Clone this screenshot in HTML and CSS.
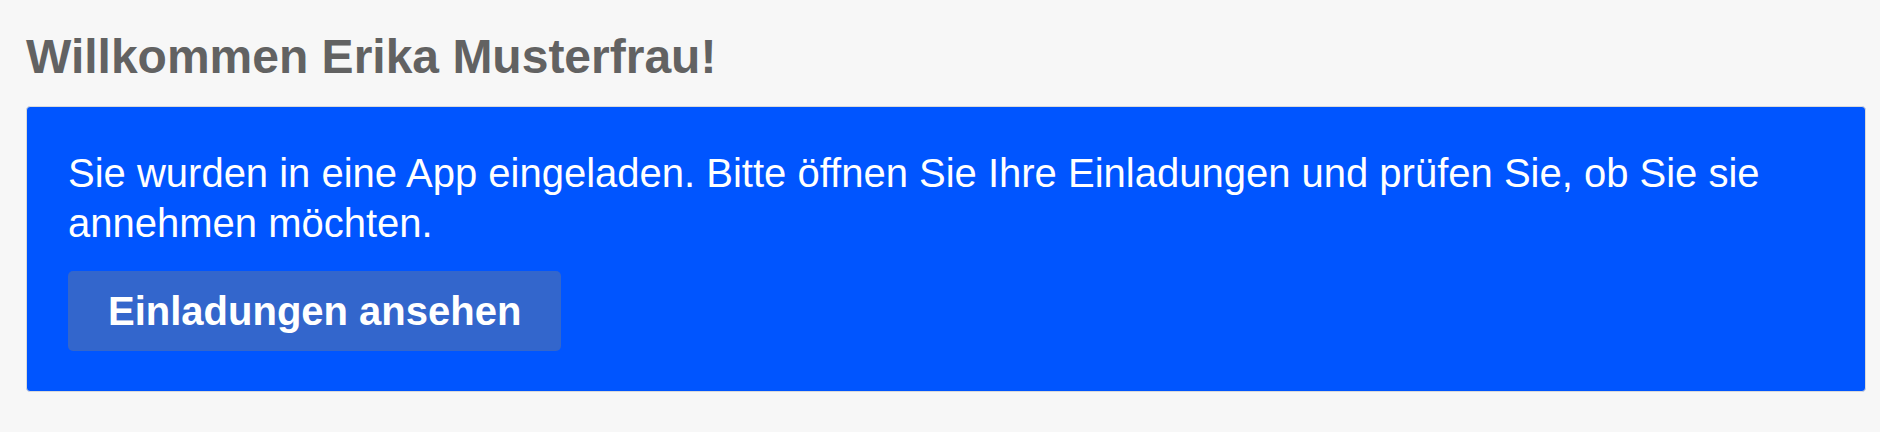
FILE: index.html
```html
<!DOCTYPE html>
<html lang="de">
<head>
<meta charset="utf-8">
<title>Willkommen</title>
<link rel="stylesheet" href="styles.css">
</head>
<body>
<main class="page">
  <h1 class="welcome">Willkommen Erika Musterfrau!</h1>
  <section class="notice">
    <p class="notice-text">Sie wurden in eine App eingeladen. Bitte öffnen Sie Ihre Einladungen und prüfen Sie, ob Sie sie annehmen möchten.</p>
    <button class="notice-button" type="button">Einladungen ansehen</button>
  </section>
</main>
</body>
</html>
```

FILE: styles.css
```css
html, body {
  margin: 0;
  padding: 0;
  background: #f7f7f7;
}
body {
  font-family: "Liberation Sans", Arial, Helvetica, sans-serif;
}
.page {
  padding: 28px 14px 0 26px;
}
.welcome {
  margin: 0 0 20px 0;
  font-size: 48px;
  line-height: 58px;
  font-weight: bold;
  color: #626262;
}
.notice {
  background: #0055ff;
  border: 1px solid #dadada;
  border-radius: 4px;
  padding: 41px 41px 40px 41px;
  display: flex;
  flex-direction: column;
  align-items: flex-start;
}
.notice-text {
  margin: 0 0 23px 0;
  font-size: 40px;
  line-height: 50px;
  color: #ffffff;
}
.notice-button {
  font-family: inherit;
  font-size: 40px;
  line-height: 48px;
  font-weight: bold;
  color: #ffffff;
  background: #3366cc;
  border: none;
  border-radius: 5px;
  padding: 16px 40px;
  margin: 0;
  cursor: pointer;
}
```
